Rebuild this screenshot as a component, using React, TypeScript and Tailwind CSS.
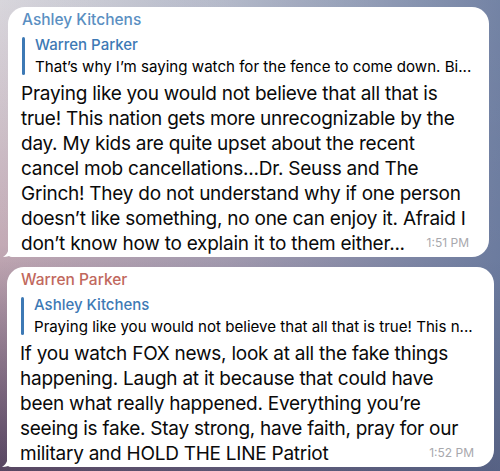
import React from 'react';

type Msg = {
  sender: string;
  senderColor: string;
  replyName: string;
  replyText: string;
  body: string;
  time: string;
};

const messages: Msg[] = [
  {
    sender: 'Ashley Kitchens',
    senderColor: 'text-[#5a8fc2]',
    replyName: 'Warren Parker',
    replyText: 'That’s why I’m saying watch for the fence to come down. Bi...',
    body: 'Praying like you would not believe that all that is true! This nation gets more unrecognizable by the day. My kids are quite upset about the recent cancel mob cancellations...Dr. Seuss and The Grinch! They do not understand why if one person doesn’t like something, no one can enjoy it. Afraid I don’t know how to explain it to them either...',
    time: '1:51 PM',
  },
  {
    sender: 'Warren Parker',
    senderColor: 'text-[#c1685d]',
    replyName: 'Ashley Kitchens',
    replyText: 'Praying like you would not believe that all that is true! This n...',
    body: 'If you watch FOX news, look at all the fake things happening. Laugh at it because that could have been what really happened. Everything you’re seeing is fake. Stay strong, have faith, pray for our military and HOLD THE LINE Patriot',
    time: '1:52 PM',
  },
];

const Tail: React.FC = () => (
  <svg
    width="10"
    height="14"
    viewBox="0 0 10 14"
    className="absolute -left-[5px] bottom-0"
  >
    <path d="M6 0 C6 7 5 11 0 14 C4 14 7 13 10 11 V0 Z" fill="#ffffff" />
  </svg>
);

const Bubble: React.FC<{ msg: Msg; width: string; className?: string }> = ({ msg, width, className }) => (
  <div className={`relative bg-white rounded-[17px] rounded-bl-[4px] pl-[13px] pr-[12px] pt-[3px] ${width} ${className ?? ''}`}>
    <Tail />
    <div className={`text-[15.5px] leading-[20px] font-medium pl-[1px] ${msg.senderColor}`}>{msg.sender}</div>
    <div className="flex mt-[4px] pl-[1px]">
      <div className="w-[3px] rounded-full bg-[#3d79b5] my-[3px]" />
      <div className="pl-[10px] min-w-0 flex-1">
        <div className="text-[15px] leading-[22px] font-medium text-[#3d79b5]">{msg.replyName}</div>
        <div className="text-[15.1px] leading-[22px] text-black whitespace-nowrap overflow-hidden">{msg.replyText}</div>
      </div>
    </div>
    <p className="text-[19px] leading-[25px] tracking-[-0.25px] text-[#0a0a0a] mt-[3px] pb-[1px] pr-[2px]">
      <span>{msg.body}</span>
      <span className="float-right pl-[8px] pr-[6px] text-[12px] leading-[23px] tracking-normal text-[#a8a8ad]">{msg.time}</span>
    </p>
  </div>
);

export default function App() {
  return (
    <div
      className="relative w-[500px] h-[471px] overflow-hidden pt-[7px] bg-[linear-gradient(to_bottom,rgba(255,255,255,0.05),rgba(0,0,0,0)_55%,rgba(20,15,45,0.22)),linear-gradient(to_right,rgba(120,137,170,0),rgba(120,137,170,0.4)_45%,rgba(105,122,158,0.97)),linear-gradient(to_bottom,#d6d4da,#c3aab5_52%,#6a5570)]"
      style={{ fontFamily: 'Inter, "Noto Sans", sans-serif' }}
    >
      <div className="flex flex-col">
        <Bubble msg={messages[0]} width="w-[481px]" className="ml-[8px]" />
        <Bubble msg={messages[1]} width="w-[487px]" className="ml-[7px] mt-[10px]" />
      </div>
    </div>
  );
}
